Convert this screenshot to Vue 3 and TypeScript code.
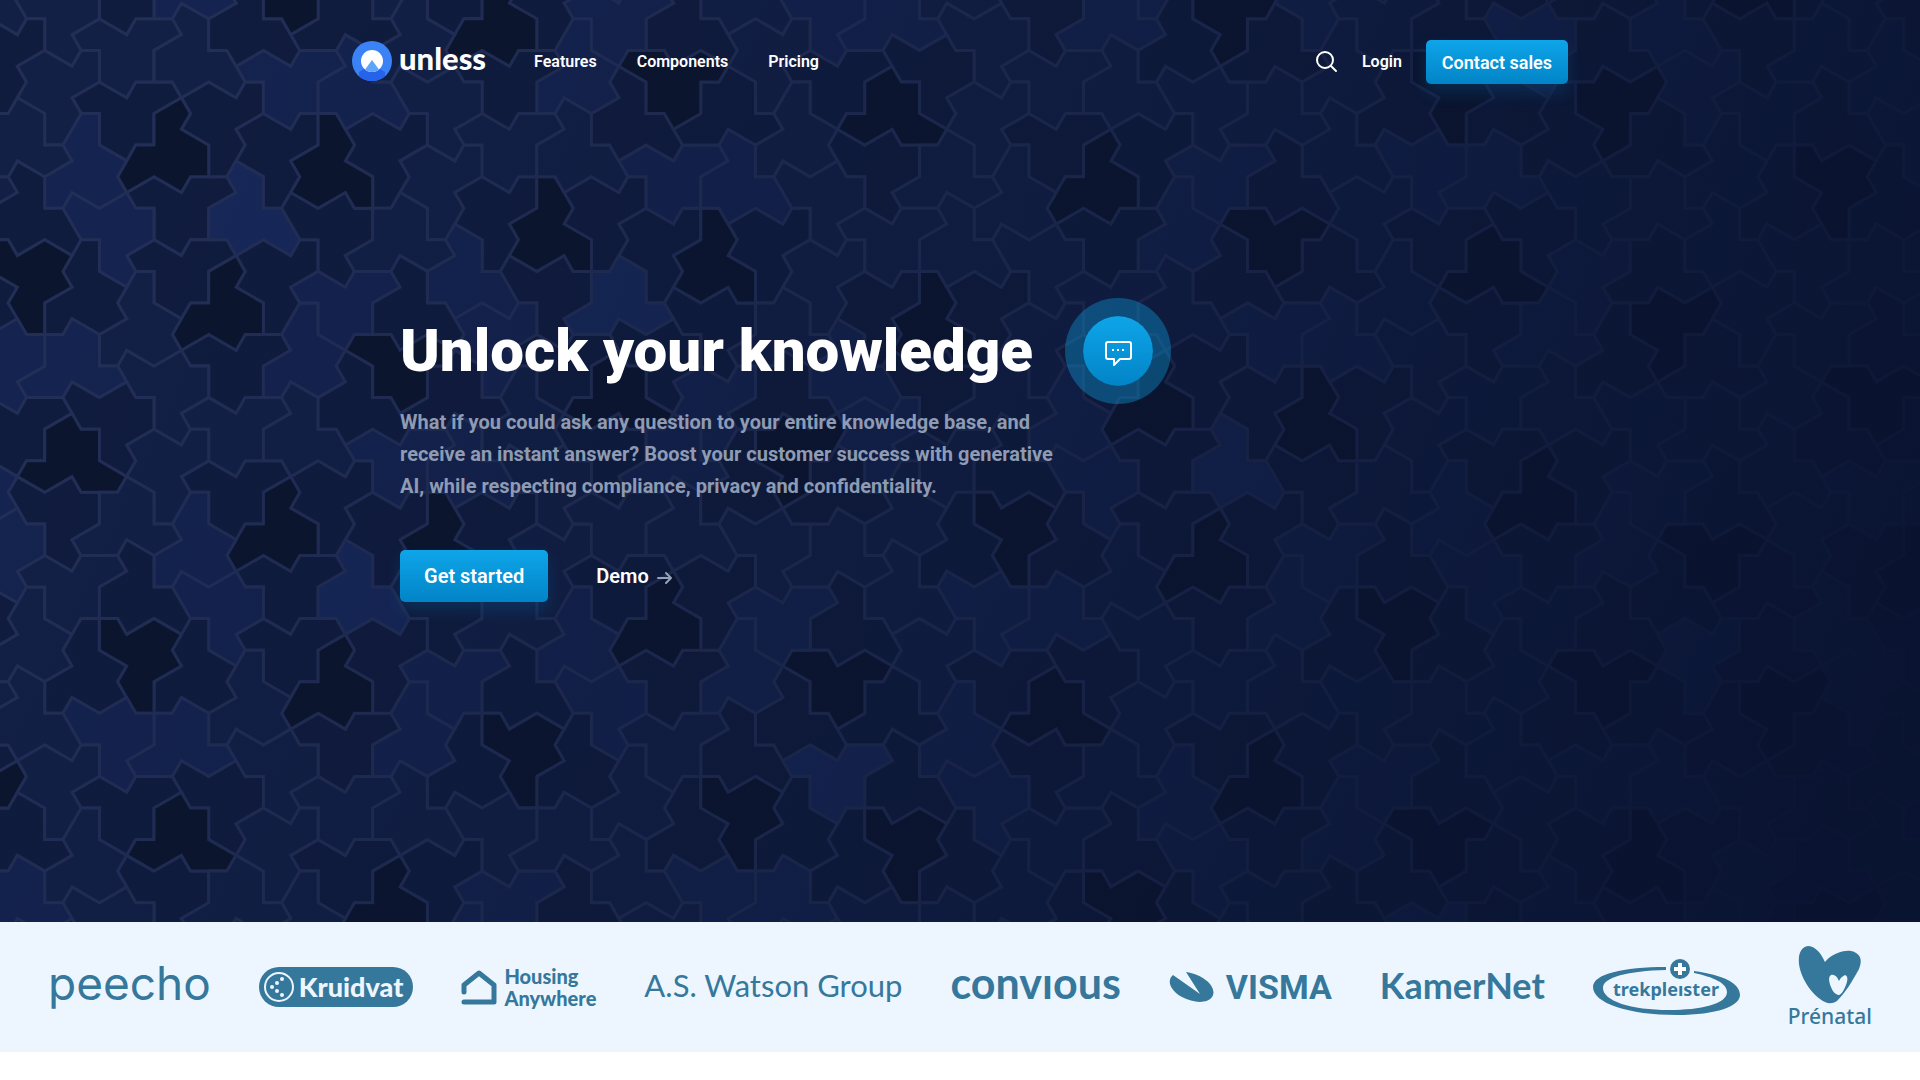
<script setup lang="ts">
type Point = [number, number]
type Matrix = [number, number, number, number, number, number]
type Kind = 'H' | 'T' | 'P' | 'F'
interface Shape { outline: Point[]; children: Child[]; center: Point; radius: number; label?: string }
interface Child { matrix: Matrix; shape: Shape }
type Rule = [number, number, Kind, number] | [number, number, number, number, Kind, number]

/* ---- Hat monotile backdrop ---- */
const HALF_ROOT3 = Math.sqrt(3) / 2
const TILE_SCALE = 36.45
const TILE_ORIGIN: Point = [555, 1755]
const AREA = { width: 2600, height: 1000 }

const multiply = (a: Matrix, b: Matrix): Matrix => [
  a[0] * b[0] + a[1] * b[3], a[0] * b[1] + a[1] * b[4], a[0] * b[2] + a[1] * b[5] + a[2],
  a[3] * b[0] + a[4] * b[3], a[3] * b[1] + a[4] * b[4], a[3] * b[2] + a[4] * b[5] + a[5],
]
const invert = (m: Matrix): Matrix => {
  const d = m[0] * m[4] - m[1] * m[3]
  return [
    m[4] / d, -m[1] / d, (m[1] * m[5] - m[2] * m[4]) / d,
    -m[3] / d, m[0] / d, (m[2] * m[3] - m[0] * m[5]) / d,
  ]
}
const apply = (m: Matrix, p: Point): Point => [m[0] * p[0] + m[1] * p[1] + m[2], m[3] * p[0] + m[4] * p[1] + m[5]]
const rotate = (a: number): Matrix => [Math.cos(a), -Math.sin(a), 0, Math.sin(a), Math.cos(a), 0]
const translate = (x: number, y: number): Matrix => [1, 0, x, 0, 1, y]
const rotateAbout = (p: Point, a: number) => multiply(translate(p[0], p[1]), multiply(rotate(a), translate(-p[0], -p[1])))
const segment = (p: Point, q: Point): Matrix => [q[0] - p[0], p[1] - q[1], p[0], q[1] - p[1], q[0] - p[0], p[1]]
const align = (a: Point, b: Point, c: Point, d: Point) => multiply(segment(c, d), invert(segment(a, b)))
const add = (a: Point, b: Point): Point => [a[0] + b[0], a[1] + b[1]]
const subtract = (a: Point, b: Point): Point => [a[0] - b[0], a[1] - b[1]]
const scaleOf = (m: Matrix) => Math.sqrt(Math.abs(m[0] * m[4] - m[1] * m[3]))
const intersect = (p1: Point, q1: Point, p2: Point, q2: Point): Point => {
  const d = (q2[1] - p2[1]) * (q1[0] - p1[0]) - (q2[0] - p2[0]) * (q1[1] - p1[1])
  const u = ((q2[0] - p2[0]) * (p1[1] - p2[1]) - (q2[1] - p2[1]) * (p1[0] - p2[0])) / d
  return [p1[0] + u * (q1[0] - p1[0]), p1[1] + u * (q1[1] - p1[1])]
}
const average = (points: Point[]): Point => [
  points.reduce((sum, p) => sum + p[0], 0) / points.length,
  points.reduce((sum, p) => sum + p[1], 0) / points.length,
]

const hatOutline: Point[] = [
  [0, 0], [-1, -1], [0, -2], [2, -2], [2, -1], [4, -2], [5, -1],
  [4, 0], [3, 0], [2, 2], [0, 3], [0, 2], [-1, 2],
].map(([x, y]): Point => [x + y / 2, HALF_ROOT3 * y])

const hat = (label: string): Shape => ({ outline: hatOutline, children: [], center: average(hatOutline), radius: 4, label })

function group(outline: Point[], children: Child[]): Shape {
  const centers = children.map(c => apply(c.matrix, c.shape.center))
  const center = average(centers)
  const radius = Math.max(...children.map((c, i) =>
    Math.hypot(...subtract(centers[i], center)) + c.shape.radius * scaleOf(c.matrix)))
  return { outline, children, center, radius }
}

function baseShapes(): Record<Kind, Shape> {
  const r = HALF_ROOT3
  const h: Point[] = [[0, 0], [4, 0], [4.5, r], [2.5, 5 * r], [1.5, 5 * r], [-0.5, r]]
  const pair = (label: string): Child[] => [
    { matrix: [0.5, 0, 1.5, 0, 0.5, r], shape: hat(label) },
    { matrix: multiply(translate(0, 2 * r), [0.5, r, 0, -r, 0.5, 0].map((v, i) => (i === 2 || i === 5 ? v : v / 2)) as Matrix), shape: hat(label) },
  ]
  return {
    H: group(h, [
      { matrix: align(hatOutline[5], hatOutline[7], h[5], h[0]), shape: hat('ring') },
      { matrix: align(hatOutline[9], hatOutline[11], h[1], h[2]), shape: hat('ring') },
      { matrix: align(hatOutline[5], hatOutline[7], h[3], h[4]), shape: hat('ring') },
      { matrix: multiply(translate(2.5, r), multiply([-0.5, -r, 0, r, -0.5, 0], [0.5, 0, 0, 0, -0.5, 0])), shape: hat('flipped') },
    ]),
    T: group([[0, 0], [3, 0], [1.5, 3 * r]], [{ matrix: [0.5, 0, 0.5, 0, 0.5, r], shape: hat('single') }]),
    P: group([[0, 0], [4, 0], [3, 2 * r], [-1, 2 * r]], pair('pair')),
    F: group([[0, 0], [3, 0], [3.5, r], [3, 2 * r], [-1, 2 * r]], pair('fan')),
  }
}

const rules: Rule[] = [
  [0, 0, 'P', 2], [1, 0, 'H', 2], [2, 0, 'P', 2], [3, 0, 'H', 2], [4, 4, 'P', 2], [0, 4, 'F', 3], [2, 4, 'F', 3],
  [4, 1, 3, 2, 'F', 0], [8, 3, 'H', 0], [9, 2, 'P', 0], [10, 2, 'H', 0], [11, 4, 'P', 2], [12, 0, 'H', 2],
  [13, 0, 'F', 3], [14, 2, 'F', 1], [15, 3, 'H', 4], [8, 2, 'F', 1], [17, 3, 'H', 0], [18, 2, 'P', 0],
  [19, 2, 'H', 2], [20, 4, 'F', 3], [20, 0, 'P', 2], [22, 0, 'H', 2], [23, 4, 'F', 3], [23, 0, 'F', 3],
  [16, 0, 'P', 2], [9, 4, 0, 2, 'T', 2], [4, 0, 'F', 3],
]

function inflate(shapes: Record<Kind, Shape>): Record<Kind, Shape> {
  const placed: Child[] = [{ matrix: translate(0, 0), shape: shapes.H }]
  const corner = (n: number, i: number) => {
    const { matrix, shape } = placed[n]
    return apply(matrix, shape.outline[i % shape.outline.length])
  }
  for (const rule of rules) {
    const short = rule.length === 4
    const from = short ? corner(rule[0], rule[1] + 1) : corner(rule[2], rule[3])
    const to = corner(rule[0], rule[1])
    const shape = shapes[short ? rule[2] : rule[4]]
    const edge = short ? rule[3] : rule[5]
    const o = shape.outline
    placed.push({ matrix: align(o[edge], o[(edge + 1) % o.length], from, to), shape })
  }
  const a = corner(8, 2)
  const b = corner(21, 2)
  const left = intersect(a, apply(rotateAbout(a, (-2 * Math.PI) / 3), b), corner(6, 2), corner(7, 2))
  const turn = rotate(-Math.PI / 3)
  const w1 = apply(turn, subtract(corner(6, 2), left))
  const w2 = apply(turn, w1)
  const h: Point[] = [left, a, add(a, w1), corner(14, 2), subtract(corner(14, 2), w2), corner(6, 2)]
  const t = add(h[1], subtract(h[4], h[5]))
  const pick = (ids: number[]) => ids.map(i => placed[i])
  return {
    H: group(h, pick([0, 9, 16, 27, 26, 6, 1, 8, 10, 15])),
    P: group([corner(7, 2), add(corner(7, 2), subtract(a, left)), a, left], pick([7, 2, 3, 4, 28])),
    F: group([b, corner(24, 2), corner(25, 0), corner(25, 2), add(corner(25, 2), subtract(left, a))], pick([21, 20, 22, 23, 24, 25])),
    T: group([t, apply(rotateAbout(t, -Math.PI / 3), h[2]), h[2]], pick([11])),
  }
}

const tiles: { points: string; label: string }[] = []

function collect(shape: Shape, matrix: Matrix) {
  const [x, y] = apply(matrix, shape.center)
  const reach = shape.radius * scaleOf(matrix)
  if (x < -reach || y < -reach || x > AREA.width + reach || y > AREA.height + reach) return
  if (shape.label) {
    const points = shape.outline.map(p => apply(matrix, p).map(v => v.toFixed(1)).join(',')).join(' ')
    tiles.push({ points, label: shape.label })
  }
  for (const child of shape.children) collect(child.shape, multiply(matrix, child.matrix))
}

let level = baseShapes()
for (let i = 0; i < 5; i++) level = inflate(level)
collect(level.H, [TILE_SCALE, 0, TILE_ORIGIN[0], 0, -TILE_SCALE, TILE_ORIGIN[1]])

const links = ['Features', 'Components', 'Pricing']
</script>

<template>
  <div class="page">
    <section class="hero">
      <svg class="backdrop" aria-hidden="true">
        <polygon v-for="(tile, i) in tiles" :key="i" :points="tile.points" :class="tile.label" />
      </svg>
      <div class="shade"></div>

      <header class="header">
        <a href="#" class="brand">
          <svg width="40" height="40" viewBox="0 0 40 40" aria-hidden="true">
            <defs>
              <clipPath id="disc"><circle cx="20" cy="20" r="20" /></clipPath>
              <clipPath id="core"><circle cx="20" cy="20" r="11" /></clipPath>
            </defs>
            <g clip-path="url(#disc)">
              <rect width="40" height="40" fill="#3b82f6" />
              <path d="M7 31L12 28Q20 34 28 28L33 31V40H7Z" fill="#2563eb" />
            </g>
            <g clip-path="url(#core)">
              <rect width="40" height="40" fill="#fff" />
              <path d="M20 19L31 34H9Z" fill="#60a5fa" />
            </g>
          </svg>
          <span>unless</span>
        </a>
        <nav class="nav">
          <a v-for="link in links" :key="link" href="#">{{ link }}</a>
        </nav>
        <div class="actions">
          <button class="search" type="button" aria-label="Search">
            <svg width="22" height="22" viewBox="0 0 22 22" fill="none" stroke="#fff" stroke-width="2" stroke-linecap="round" aria-hidden="true">
              <circle cx="9" cy="9" r="8" />
              <path d="M15 15L20 20" />
            </svg>
          </button>
          <a href="#" class="login">Login</a>
          <button class="primary compact" type="button">Contact sales</button>
        </div>
      </header>

      <div class="intro">
        <div class="headline">
          <h1>Unlock your knowledge</h1>
          <button class="bubble" type="button" aria-label="Open chat">
            <svg width="28" height="30" viewBox="0 0 28 30" fill="none" stroke="#fff" stroke-width="2" stroke-linejoin="round" aria-hidden="true">
              <path d="M4 6H25Q27 6 27 8V21Q27 23 25 23H16L10 29V23H4Q2 23 2 21V8Q2 6 4 6Z" />
              <path d="M8 14h2M13 14h2M18 14h2" />
            </svg>
          </button>
        </div>
        <p>What if you could ask any question to your entire knowledge base, and receive an instant answer? Boost your customer success with generative AI, while respecting compliance, privacy and confidentiality.</p>
        <div class="cta">
          <button class="primary" type="button">Get started</button>
          <a href="#" class="demo">
            Demo
            <svg width="16" height="16" viewBox="0 0 16 16" fill="none" stroke="#94a3b8" stroke-width="2" stroke-linecap="round" stroke-linejoin="round" aria-hidden="true">
              <path d="M1 10H14M9 5L14 10L9 15" />
            </svg>
          </a>
        </div>
      </div>
    </section>

    <section class="clients" aria-label="Clients">
      <span class="peecho">peecho</span>
      <span class="kruidvat">
        <svg width="32" height="32" viewBox="0 0 32 32" aria-hidden="true">
          <circle cx="16" cy="16" r="14" fill="none" stroke="#edf6ff" stroke-width="2" />
          <g fill="#edf6ff">
            <circle cx="19" cy="8" r="2" /><circle cx="14" cy="12" r="2" /><circle cx="9" cy="16" r="2" />
            <circle cx="14" cy="20" r="2" /><circle cx="19" cy="24" r="2" />
          </g>
        </svg>
        Kruidvat
      </span>
      <span class="housing">
        <svg width="36" height="36" viewBox="0 0 36 36" fill="none" stroke="#36789b" stroke-width="5" stroke-linecap="round" stroke-linejoin="round" aria-hidden="true">
          <path d="M3 23V16L18 4L33 16V33H3" />
        </svg>
        <span class="stacked"><span>Housing</span><span>Anywhere</span></span>
      </span>
      <span class="watson">A.S. Watson Group</span>
      <span class="convious">convıous</span>
      <span class="visma">
        <svg width="45" height="30" viewBox="0 0 45 30" fill="#36789b" aria-hidden="true">
          <path d="M4 3C-3 9 2 19 13 25C24 31 38 32 43 25C49 16 36 3 17 0L31 22Z" />
        </svg>
        VISMA
      </span>
      <span class="kamernet">KamerNet</span>
      <svg class="trek" width="147" height="56" viewBox="0 0 147 56" role="img">
        <path d="M73 8C30 8 0 15 0 28C0 44 35 56 84 56C124 56 147 47 147 36C147 24 130 16 101 12V14C120 18 134 24 134 33C134 45 108 51 76 51C38 51 10 42 10 29C10 18 35 12 73 11Z" fill="#36789b" />
        <circle cx="87" cy="10" r="10" fill="#36789b" />
        <path d="M87 4V16M81 10H93" stroke="#fff" stroke-width="4" />
        <text x="73" y="37" text-anchor="middle">trekpleıster</text>
      </svg>
      <span class="prenatal">
        <svg width="64" height="58" viewBox="0 0 64 58" fill="#36789b" aria-hidden="true">
          <path d="M27 16C22 5 16 0 10 0C3 1 0 8 1 18C3 34 16 51 27 56Q33 59 39 55C47 47 54 36 61 23C65 13 62 7 53 5C44 4 34 8 27 16Z" />
          <path d="M41 35C39 30 36 28 33 29C30 31 31 36 33 41C35 47 39 49 41 49C44 48 46 44 48 39C50 34 50 30 47 29C45 30 42 32 41 35Z" fill="#edf6ff" />
        </svg>
        Prénatal
      </span>
    </section>
  </div>
</template>

<style>
body {
  margin: 0;
  background: #fff;
}
</style>

<style scoped>
.page {
  font-family: Roboto, "Liberation Sans", sans-serif;
  color: #fff;
}

a {
  color: inherit;
  text-decoration: none;
}

button {
  border: 0;
  padding: 0;
  font: inherit;
  color: inherit;
  cursor: pointer;
}

.hero {
  position: relative;
  overflow: hidden;
  box-sizing: border-box;
  min-height: 922px;
  padding: 40px 24px;
  background: #101b3e;
}

.backdrop,
.shade {
  position: absolute;
  inset: 0;
  width: 100%;
  height: 100%;
}

.backdrop polygon {
  stroke: #222e56;
  stroke-width: 3;
  fill: #111c40;
}

.backdrop .flipped { fill: #0b152d; }
.backdrop .ring { fill: #101c3e; }
.backdrop .fan { fill: #122046; }
.backdrop .pair { fill: #14234f; }
.backdrop .single { fill: #172859; }

.shade {
  background: linear-gradient(115deg, rgba(10, 20, 50, 0) 10%, rgba(10, 20, 50, 0.4) 55%, rgba(9, 19, 48, 0.92) 94%);
}

.header,
.intro {
  position: relative;
  max-width: 1216px;
  margin: 0 auto;
}

.header {
  display: flex;
  align-items: center;
  height: 44px;
  font-size: 16px;
  font-weight: 600;
}

.brand {
  display: flex;
  align-items: center;
  gap: 7px;
  height: 42px;
  padding-bottom: 2px;
  font: 900 31px/36px Lato, sans-serif;
}

.brand span {
  padding-bottom: 6px;
}

.nav {
  display: flex;
  gap: 40px;
  margin-left: 48px;
  padding-bottom: 2px;
}

.actions {
  display: flex;
  align-items: center;
  gap: 24px;
  margin-left: auto;
}

.login {
  padding-bottom: 2px;
}

.search {
  display: flex;
  background: none;
}

.primary {
  height: 52px;
  padding: 0 24px;
  border-radius: 5px;
  background: linear-gradient(#0ea5e9, #0284c7);
  box-shadow: 0 8px 16px rgba(2, 132, 199, 0.2);
  font-size: 20px;
  font-weight: 600;
}

.primary.compact {
  height: 44px;
  padding: 0 16px;
  font-size: 18px;
}

.intro {
  box-sizing: border-box;
  padding: 214px 48px 0;
}

.headline {
  display: flex;
  align-items: center;
  gap: 32px;
}

h1 {
  margin: 0;
  font-size: 60px;
  line-height: 64px;
  font-weight: 900;
}

.bubble {
  display: flex;
  align-items: center;
  justify-content: center;
  box-sizing: content-box;
  width: 70px;
  height: 70px;
  border: 18px solid rgba(14, 165, 233, 0.36);
  border-radius: 50%;
  background: linear-gradient(#0ea5e9, #0284c7) padding-box;
}

.intro p {
  max-width: 660px;
  margin: 2px 0 48px;
  font-size: 20px;
  line-height: 32px;
  font-weight: 700;
  color: #8e9bb3;
}

.cta {
  display: flex;
  align-items: center;
  gap: 48px;
  font-size: 20px;
  font-weight: 600;
}

.demo {
  display: flex;
  align-items: center;
  gap: 8px;
}

.clients {
  display: flex;
  align-items: center;
  justify-content: space-between;
  box-sizing: border-box;
  min-height: 130px;
  padding: 0 48px;
  background: #edf6ff;
  color: #36789b;
  white-space: nowrap;
}

.peecho {
  padding-bottom: 8px;
  font: 400 46px/48px Inter, sans-serif;
}

.kruidvat {
  display: flex;
  align-items: center;
  gap: 4px;
  height: 40px;
  padding: 0 10px 0 4px;
  border-radius: 20px;
  background: #36789b;
  color: #edf6ff;
  font: 900 27px/40px Lato, sans-serif;
}

.housing {
  display: flex;
  align-items: center;
  gap: 7px;
  font: 900 20px/22px Lato, sans-serif;
}

.stacked {
  display: flex;
  flex-direction: column;
}

.watson {
  padding-bottom: 4px;
  font: 400 31px/40px Lato, sans-serif;
}

.convious {
  padding-bottom: 8px;
  font: 700 43px/48px Lato, sans-serif;
}

.visma {
  display: flex;
  align-items: center;
  gap: 12px;
  font: 700 34px/40px Roboto, sans-serif;
}

.kamernet {
  padding-bottom: 4px;
  font: 700 36px/48px Lato, sans-serif;
}

.trek text {
  font: 700 18px "Noto Sans", sans-serif;
  fill: #36789b;
}

.prenatal {
  display: flex;
  flex-direction: column;
  align-items: center;
  font: 500 21px/24px "Noto Sans", sans-serif;
}
</style>
